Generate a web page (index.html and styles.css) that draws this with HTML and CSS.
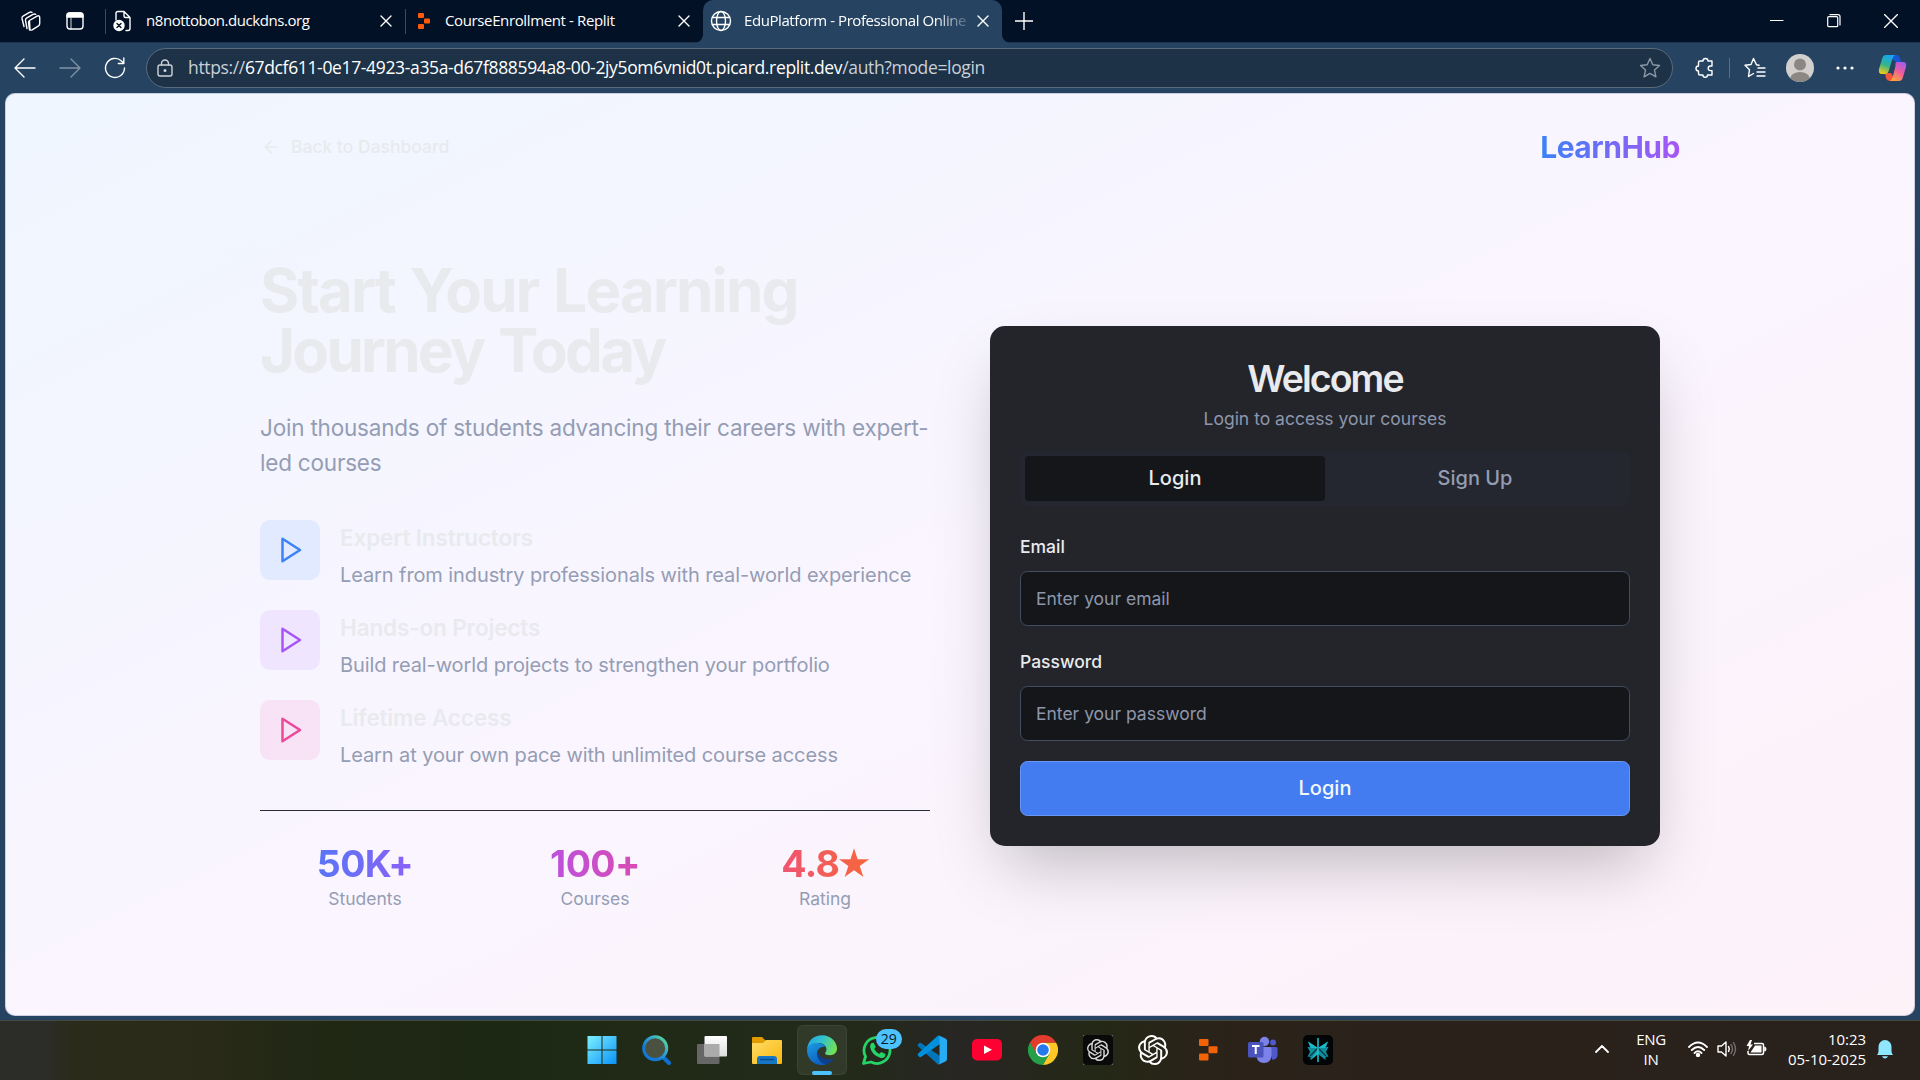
FILE: index.html
```html
<!DOCTYPE html>
<html lang="en">
<head>
<meta charset="utf-8">
<title>EduPlatform - Professional Online</title>
<link rel="stylesheet" href="styles.css">
</head>
<body>
<div class="tabstrip">
  <div class="strip-tools">
    <svg class="ic" width="22" height="24" viewBox="0 0 22 24"><path d="M9.500 11.500l7.500-4.300q2.500-1.200 2.700 1.200v6.200q0 1.500-1.200 2.300l-6.300 3.900q-2 1-2.300-1.200zM9.500 11.500q-1 .6-1 2l1 7.500M7 19.500L5.500 11.500q-.2-1.600 1-2.300l6.500-3.900q1.500-.7 2.700 0M4 17.500L2 9.500q-.3-1.600 1-2.300L9.500 3.300q1.300-.7 2.500 0"/></svg>
    <svg class="ic" width="20" height="20" viewBox="0 0 20 20"><rect x="2" y="2" width="16" height="16" rx="3"/><path d="M2 6V4.500Q2 2 4.500 2h11Q18 2 18 4.500V6z" fill="#fff"/><path d="M6 7v11" stroke-opacity=".6"/></svg>
  </div>
  <div class="tab tab-first">
    <svg class="ic" width="20" height="22" viewBox="0 0 20 22"><path d="M3 10V3.500Q3 1.500 5 1.500h6l6 6v11q0 2-2 2h-2M11 1.500v4.500q0 1.500 1.500 1.500H17"/><circle cx="6" cy="15.500" r="5" fill="#fff"/><path d="M4 13.500l4 4m0-4l-4 4" stroke="#041227"/></svg>
    <span class="tab-title t1">n8nottobon.duckdns.org</span>
    <svg class="ic close" width="12" height="12" viewBox="0 0 12 12"><path d="M1 1l10 10m0-10L1 11"/></svg>
  </div>
  <div class="tab tab-second">
    <svg width="14" height="16" viewBox="0 0 14 16" fill="#ff5a0a"><rect x="1" y="0" width="6" height="5" rx="1"/><rect x="7" y="5.500" width="6" height="5" rx="1"/><rect x="1" y="11" width="6" height="5" rx="1"/></svg>
    <span class="tab-title t2">CourseEnrollment - Replit</span>
    <svg class="ic close" width="12" height="12" viewBox="0 0 12 12"><path d="M1 1l10 10m0-10L1 11"/></svg>
  </div>
  <div class="tab tab-active">
    <svg class="ic" width="22" height="22" viewBox="0 0 22 22"><circle cx="11" cy="11" r="9.500"/><ellipse cx="11" cy="11" rx="4.500" ry="9.500"/><path d="M2.500 7.500h17M2.500 14.500h17"/></svg>
    <span class="tab-title t3">EduPlatform - Professional Online</span>
    <svg class="ic close" width="12" height="12" viewBox="0 0 12 12"><path d="M1 1l10 10m0-10L1 11"/></svg>
  </div>
  <svg class="ic plus" width="18" height="18" viewBox="0 0 18 18"><path d="M9 0v18M0 9h18"/></svg>
  <div class="window-buttons">
    <svg class="ic sharp" width="14" height="14" viewBox="0 0 14 14"><path d="M0 6.500h13"/></svg>
    <svg class="ic sharp" width="14" height="14" viewBox="0 0 14 14"><rect x=".7" y="2.700" width="10" height="10" rx="1"/><path d="M3 .7h8q2 0 2 2V11"/></svg>
    <svg class="ic" width="14" height="14" viewBox="0 0 14 14"><path d="M.5.5l13 13m0-13l-13 13"/></svg>
  </div>
</div>

<div class="toolbar">
  <svg class="ic nav-back" width="22" height="20" viewBox="0 0 22 20"><path d="M21 10H1.500M10 1L1 10l9 9"/></svg>
  <svg class="ic nav-fwd" width="22" height="20" viewBox="0 0 22 20"><path d="M1 10h19.500M12 1l9 9-9 9"/></svg>
  <svg class="ic" width="22" height="22" viewBox="0 0 22 22"><path d="M20.500 11a9.500 9.500 0 1 1-3-7L19.500 6M19.800 1v5.500h-5.500"/></svg>
  <div class="address">
    <svg class="ic dim" width="18" height="18" viewBox="0 0 18 18"><rect x="2" y="6" width="14" height="11" rx="2"/><path d="M5.500 6V4.500a3.500 3.500 0 0 1 7 0V6"/><circle cx="9" cy="11.500" r=".8" fill="#fff"/></svg>
    <span class="url"><span class="soft">https://</span>67dcf611-0e17-4923-a35a-d67f888594a8-00-2jy5om6vnid0t.picard.replit.dev<span class="soft">/auth?mode=login</span></span>
    <svg class="ic star" width="22" height="22" viewBox="0 0 22 22"><path d="M11 1.500l2.800 6.200 6.700.8-5 4.600 1.400 6.700L11 16.400l-5.900 3.400 1.400-6.700-5-4.600 6.700-.8z"/></svg>
  </div>
  <div class="toolbar-right">
    <svg class="ic" width="22" height="22" viewBox="0 0 22 22"><path d="M6 4h3a2.500 2.500 0 0 1 5 0h4v5h-1.500a2.300 2.300 0 0 0 0 4.600H18V18h-4.500a2.300 2.300 0 0 1-4.600 0H6q-1.500 0-1.500-1.500V14a2.400 2.400 0 0 1 0-5V5.500Q4.500 4 6 4z"/></svg>
    <i class="sep"></i>
    <svg class="ic fav" width="22" height="22" viewBox="0 0 22 22"><path d="M12.500 7.800L9.500 1.500 7 7.500l-6 .8 4.500 4.400L4.500 19.500l5-3M12.500 7.800L15 8.300M14 11h7M13 15h8M13 19h8"/></svg>
    <svg class="avatar" width="28" height="28" viewBox="0 0 28 28"><clipPath id="av"><circle cx="14" cy="14" r="14"/></clipPath><g clip-path="url(#av)"><path fill="#d2d0ce" d="M0 0h28v28H0z"/><circle cx="14" cy="10.500" r="6" fill="#8d8784"/><ellipse cx="14" cy="25" rx="10" ry="7" fill="#8d8784"/></g></svg>
    <svg class="dots" width="18" height="4" viewBox="0 0 18 4" fill="#fff"><circle cx="2" cy="2" r="1.600"/><circle cx="9" cy="2" r="1.600"/><circle cx="16" cy="2" r="1.600"/></svg>
    <svg class="copilot" width="30" height="28" viewBox="0 0 30 28"><defs><linearGradient id="cp1" x1=".5" y1="0" x2=".2" y2="1"><stop offset="0" stop-color="#19a5ee"/><stop offset=".5" stop-color="#30b68b"/><stop offset="1" stop-color="#ffcb10"/></linearGradient><linearGradient id="cp2" x1=".8" y1="0" x2=".3" y2="1"><stop offset="0" stop-color="#a25bf0"/><stop offset=".5" stop-color="#ef5c9c"/><stop offset="1" stop-color="#ffa13d"/></linearGradient></defs><path d="M8 1h11q2 0 3 3l1 4h-5z" fill="#1656cf"/><path d="M7 19h6l5 8h-6q-3 0-4-3z" fill="#f5543c"/><path d="M8 1h9q-2 1-3 5l-3 10q-1 4-4 4H4q-4 0-3-5L4 5q1-4 4-4z" fill="url(#cp1)"/><path d="M19 8h6q4 0 3 5l-3 10q-1 4-4 4h-9q2-1 3-5l2.500-10Q17 8 19 8z" fill="url(#cp2)"/></svg>
  </div>
</div>

<div class="viewport">
  <header class="site-header">
    <a class="back"><svg width="20" height="20" viewBox="0 0 24 24"><path d="M12 19l-7-7 7-7M19 12H5"/></svg>Back to Dashboard</a>
    <div class="brand">LearnHub</div>
  </header>
  <main class="split">
    <section class="pitch">
      <h1><span class="line-one">Start Your Learning</span> <span class="line-two">Journey Today</span></h1>
      <p class="lead">Join thousands of students advancing their careers with expert-<wbr>led courses</p>
      <ul class="features">
        <li><span class="badge blue"><svg viewBox="0 0 24 24"><path d="M6 3l14 9-14 9z"/></svg></span><div><h3>Expert Instructors</h3><p>Learn from industry professionals with real-world experience</p></div></li>
        <li><span class="badge purple"><svg viewBox="0 0 24 24"><path d="M6 3l14 9-14 9z"/></svg></span><div><h3>Hands-on Projects</h3><p>Build real-world projects to strengthen your portfolio</p></div></li>
        <li><span class="badge pink"><svg viewBox="0 0 24 24"><path d="M6 3l14 9-14 9z"/></svg></span><div><h3>Lifetime Access</h3><p>Learn at your own pace with unlimited course access</p></div></li>
      </ul>
      <div class="stats">
        <div><strong class="g1">50K+</strong><span>Students</span></div>
        <div><strong class="g2">100+</strong><span>Courses</span></div>
        <div><strong class="g3">4.8<span class="rate">★</span></strong><span>Rating</span></div>
      </div>
    </section>
    <section class="card">
      <h2>Welcome</h2>
      <p class="sub">Login to access your courses</p>
      <div class="switch"><button class="on">Login</button><button>Sign Up</button></div>
      <form>
        <label for="email">Email</label>
        <input id="email" type="email" placeholder="Enter your email">
        <label for="password">Password</label>
        <input id="password" type="password" placeholder="Enter your password">
        <button class="submit" type="button">Login</button>
      </form>
    </section>
  </main>
</div>

<footer class="taskbar">
  <div class="apps">
    <span><svg width="30" height="30" viewBox="0 0 30 30"><defs><linearGradient id="win" x1="0" y1="0" x2="1" y2="1"><stop offset="0" stop-color="#7df0ff"/><stop offset="1" stop-color="#0a93f8"/></linearGradient></defs><path fill="url(#win)" d="M.5 1h14v13.500H.5zM15.500 1h14v13.500h-14zM.5 15.500h14V29H.5zM15.500 15.500h14V29h-14z"/></svg></span>
    <span><svg width="30" height="30" viewBox="0 0 30 30" fill="none"><defs><linearGradient id="sr" x1="1" y1="0" x2="0.300" y2=".7"><stop offset="0" stop-color="#62e388"/><stop offset=".5" stop-color="#32a9d0"/><stop offset="1" stop-color="#1179d8"/></linearGradient></defs><path d="M21 22l6 6" stroke="#0f6fd0" stroke-width="4" stroke-linecap="round"/><circle cx="13.200" cy="13.200" r="11.500" fill="#4a5141" stroke="url(#sr)" stroke-width="3"/></svg></span>
    <span><svg width="30" height="30" viewBox="0 0 30 30"><defs><linearGradient id="tv" x1="0" y1="0" x2="0" y2="1"><stop offset="0" stop-color="#fff"/><stop offset="1" stop-color="#dcdcdc"/></linearGradient></defs><rect x="0" y="9" width="22.500" height="20" rx="1" fill="#666"/><rect x="7.500" y="1" width="22.500" height="20.500" rx="1" fill="url(#tv)"/><path d="M7.500 9h15v12.500h-15z" fill="#ababab"/></svg></span>
    <span><svg width="30" height="30" viewBox="0 0 30 30"><defs><linearGradient id="fo" x1="0" y1="0" x2="1" y2="1"><stop offset="0" stop-color="#ffdc69"/><stop offset="1" stop-color="#f9b70b"/></linearGradient></defs><path d="M0 3q0-1 1-1h9l4 4v6H0z" fill="#e19a00"/><path d="M0 8h11l3-3h15q1 0 1 1v22q0 1-1 1H1q-1 0-1-1z" fill="url(#fo)"/><path d="M5 29v-5q0-3 3-3h14q3 0 3 3v5z" fill="#1677c7"/><path d="M8 24.500h14" stroke="#0a4a8c" stroke-width="1.500"/></svg></span>
    <span class="active"><svg width="30" height="30" viewBox="0 0 30 30"><defs><linearGradient id="eg" x1="0" y1=".2" x2="1" y2=".5"><stop offset="0" stop-color="#23a5e6"/><stop offset=".5" stop-color="#34c4c8"/><stop offset="1" stop-color="#73e155"/></linearGradient><linearGradient id="eb" x1="0" y1="0" x2=".5" y2="1"><stop offset="0" stop-color="#1b9de2"/><stop offset="1" stop-color="#0c61c0"/></linearGradient></defs><path d="M11 14q-1 5 3 8 5 3.500 13 1.500Q22.500 30 15 29.800 8 29 7 22z" fill="#103f8f"/><path d="M0 14.500C1 5 7 .2 15 .2 24 .2 30 7 30 13.500c0 4-3 6.700-7 6.700-3 0-5-.8-5-2 0-.8 1.500-1.500 1.500-4C19.500 11 16 8 11.500 8 6 8 1 11 0 14.500z" fill="url(#eg)"/><path d="M0 15C.5 10 6 7.500 11 8c4 .3 6.500 2 7.500 4-5-1-9 3-8.500 7.500C10.500 25 15 29 19 29.300 9 32 0 25.500 0 15z" fill="url(#eb)"/></svg></span>
    <span class="wa"><svg width="30" height="30" viewBox="0 0 30 30" fill="none"><path d="M1.500 28.500l2-7A13 13 0 1 1 9 27z" stroke="#25d366" stroke-width="2.800" stroke-linejoin="round"/><path d="M9.500 8l2.200-.3 2 4.300-1.500 2q2 3.500 5 5l2-2 4.300 2-.3 2.200q-1.500 2.300-4.500 1.800Q10 20.500 8 12q0-2.500 1.500-4z" fill="#25d366"/></svg><b>29</b></span>
    <span><svg width="30" height="30" viewBox="0 0 30 30"><path d="M1.200 9.200Q0 10.500 1.200 11.500L21 29.500l2-1V21L4 8q-1.500-.8-2.800 1.200z" fill="#0075ba"/><path d="M1.200 20.800Q0 19.500 1.200 18.500L21 .5l2 1V9L4 22q-1.500.8-2.800-1.200z" fill="#0090dc"/><path d="M21.500.2L28.500 3.500Q30 4.200 30 6v18q0 1.800-1.500 2.500L21.500 29.800q1.500-1 1-4V4.200q.5-3-1-4z" fill="#27abf3"/></svg></span>
    <span><svg width="30" height="30" viewBox="0 0 30 30"><rect x="0" y="4" width="30" height="21.500" rx="5" fill="#ff0033"/><path d="M12 10.500l8 4.300-8 4.300z" fill="#fff"/></svg></span>
    <span><svg width="30" height="30" viewBox="0 0 30 30"><path d="M15 15l6.500 3.750L15 30A15 15 0 0 1 2 7.500z" fill="#26a048"/><path d="M15 7.500h13A15 15 0 0 1 15 30l6.500-11.250z" fill="#fdc726"/><path d="M2 7.500A15 15 0 0 1 28 7.500H15L8.500 18.750z" fill="#e33b2e"/><circle cx="15" cy="15" r="7.300" fill="#fff"/><circle cx="15" cy="15" r="5.800" fill="#2679ec"/></svg></span>
    <span><svg width="30" height="30" viewBox="0 0 30 30"><rect width="30" height="30" fill="#777"/><rect width="30" height="30" rx="3" fill="#0a0a0a"/><g transform="translate(4 4) scale(.917)" fill="#d8d8d8"><path id="knot" d="M22.2819 9.8211a5.9847 5.9847 0 0 0-.5157-4.9108 6.0462 6.0462 0 0 0-6.5098-2.9A6.0651 6.0651 0 0 0 4.9807 4.1818a5.9847 5.9847 0 0 0-3.9977 2.9 6.0462 6.0462 0 0 0 .7427 7.0966 5.98 5.98 0 0 0 .511 4.9107 6.051 6.051 0 0 0 6.5146 2.9001A5.9847 5.9847 0 0 0 13.2599 24a6.0557 6.0557 0 0 0 5.7718-4.2058 5.9894 5.9894 0 0 0 3.9977-2.9001 6.0557 6.0557 0 0 0-.7475-7.0729zm-9.022 12.6081a4.4755 4.4755 0 0 1-2.8764-1.0408l.1419-.0804 4.7783-2.7582a.7948.7948 0 0 0 .3927-.6813v-6.7369l2.02 1.1686a.071.071 0 0 1 .038.052v5.5826a4.504 4.504 0 0 1-4.4945 4.4944zm-9.6607-4.1254a4.4708 4.4708 0 0 1-.5346-3.0137l.142.0852 4.783 2.7582a.7712.7712 0 0 0 .7806 0l5.8428-3.3685v2.3324a.0804.0804 0 0 1-.0332.0615L9.74 19.9502a4.4992 4.4992 0 0 1-6.1408-1.6464zM2.3408 7.8956a4.485 4.485 0 0 1 2.3655-1.9728V11.6a.7664.7664 0 0 0 .3879.6765l5.8144 3.3543-2.0201 1.1685a.0757.0757 0 0 1-.071 0l-4.8303-2.7865A4.504 4.504 0 0 1 2.3408 7.872zm16.5963 3.8558L13.1038 8.364 15.1192 7.2a.0757.0757 0 0 1 .071 0l4.8303 2.7913a4.4944 4.4944 0 0 1-.6765 8.1042v-5.6772a.79.79 0 0 0-.407-.667zm2.0107-3.0231l-.142-.0852-4.7735-2.7818a.7759.7759 0 0 0-.7854 0L9.409 9.2297V6.8974a.0662.0662 0 0 1 .0284-.0615l4.8303-2.7866a4.4992 4.4992 0 0 1 6.6802 4.66zM8.3065 12.863l-2.02-1.1638a.0804.0804 0 0 1-.038-.0567V6.0742a4.4992 4.4992 0 0 1 7.3757-3.4537l-.142.0805L8.704 5.459a.7948.7948 0 0 0-.3927.6813zm1.0976-2.3654l2.602-1.4998 2.6069 1.4998v2.9994l-2.5974 1.4997-2.6067-1.4997Z"/></g></svg></span>
    <span><svg width="30" height="30" viewBox="0 0 24 24" fill="#fff"><use href="#knot"/></svg></span>
    <span><svg width="30" height="30" viewBox="0 0 30 30" fill="#f26207"><rect x="6" y="4" width="9.500" height="7" rx="1"/><rect x="15.500" y="11.300" width="9" height="7" rx="1"/><rect x="6" y="18.600" width="9.500" height="7" rx="1"/></svg></span>
    <span><svg width="30" height="30" viewBox="0 0 30 30"><circle cx="25" cy="7.500" r="3" fill="#5059c9"/><path d="M20 12h8q1.500 0 1.500 1.500V20q0 4-5 5z" fill="#5059c9"/><circle cx="16.500" cy="6.500" r="4.700" fill="#7b83eb"/><path d="M9 12h13q1.500 0 1.500 1.500v7Q23 28 16 28t-7.500-7z" fill="#7b83eb"/><rect x="0" y="7" width="15.500" height="15.500" rx="1.500" fill="#4b53bc"/><path d="M4 11h7.500M7.750 11v8" stroke="#fff" stroke-width="2"/></svg></span>
    <span><svg width="30" height="30" viewBox="0 0 30 30"><rect width="30" height="30" rx="5" fill="#020506"/><path d="M5 6.500l10 6.500 10-6.500-2 5.500h2.500l-2.500 5 2.500 4.500-3 .5v3L15 19l-7.500 6v-3l-3-.5L7 17l-2.500-5H7z" fill="#118d9b"/><path d="M15 13L5 6.500 8 13zM15 13l10-6.500-3 6.500zM15 15v4l-7.500 6z" fill="#1cb9c8"/><path d="M15 13l-8 8M15 13l8 8" stroke="#03363e" stroke-width="1.100" fill="none"/><path d="M15 3v24" stroke="#22c6d6" stroke-width="1.500"/></svg></span>
  </div>
  <div class="tray">
    <svg class="ic thick" width="14" height="8" viewBox="0 0 14 8"><path d="M1 7l6-6 6 6"/></svg>
    <div class="lang">ENG<br>IN</div>
    <div class="status">
      <svg class="ic thick" width="20" height="16" viewBox="0 0 20 16"><path d="M1 6Q10-3 19 6M3.800 9Q10 3 16.200 9M6.500 12Q10 8.500 13.500 12" /><circle cx="10" cy="14" r="1.300" fill="#fff"/></svg>
      <svg class="ic" width="20" height="18" viewBox="0 0 20 18"><path d="M1 6h3.500L9 2v14l-4.500-4H1zM11.500 6.500q1.600 2.500 0 5"/><path d="M14 4.500q3 4.500 0 9M16.500 2.500q4 6.500 0 13" stroke-opacity=".35"/></svg>
      <svg width="21" height="18" viewBox="0 0 21 18"><path d="M8 3.500h8q1.500 0 1.500 1.500v8q0 1.500-1.500 1.500H3.500Q2 14.500 2 13V11" fill="none" stroke="#fff" stroke-width="1.500"/><path d="M9 5.500h6.500v7h-11z" fill="#fff"/><path d="M4 0L.5 6H3L2 11l5-6.500H4.500L6 0zM18.200 6.500q2.300 0 2.300 2.500t-2.300 2.500z" fill="#fff"/></svg>
    </div>
    <div class="clock">10:23<br>05-10-2025</div>
    <svg width="18" height="20" viewBox="0 0 18 20"><path d="M1 16q1.500-1.500 1.500-4V7.500a6.500 6.500 0 0 1 13 0V12q0 2.500 1.500 4zM6 17.200h6q-1 2.300-3 2.300t-3-2.300z" fill="#8fe6ff"/></svg>
  </div>
</footer>
</body>
</html>
```

FILE: styles.css
```css
* { box-sizing: border-box; margin: 0; padding: 0; }
html { font-size: 20px; }
body { width: 1920px; height: 1080px; overflow: hidden; display: flex; flex-direction: column; background: #264462; font-family: Inter, "Liberation Sans", sans-serif; line-height: 1.5; }
svg { display: block; flex: none; }
.ic { fill: none; stroke: #fff; stroke-width: 1.4; stroke-linecap: round; stroke-linejoin: round; }
.thick { stroke-width: 1.8; }
.sharp { stroke-width: 1.2; }

.tabstrip { height: 43px; flex: none; display: flex; align-items: center; background: #031127; border-bottom: 1px solid #1d3350; font-family: "Open Sans", "Noto Sans", sans-serif; font-size: 15px; color: #fff; padding-right: 22px; }
.strip-tools { display: flex; align-items: center; gap: 23px; width: 105px; padding-left: 20px; }
.tab { display: flex; align-items: center; }
.tab-title { white-space: nowrap; line-height: 22px; padding-bottom: 2px; }
.tab .close { margin-left: auto; }
.tab-first { width: 300px; height: 25px; border-left: 1px solid #3d4a5c; padding: 0 13px 0 7px; }
.tab-first .tab-title { margin-left: 13px; }
.tab-second { width: 298px; height: 25px; border-left: 1px solid #3d4a5c; padding: 0 13px 0 11px; }
.tab-second .tab-title { margin-left: 14px; }
.tab-active { position: relative; width: 299px; height: 43px; align-self: flex-start; background: #264462; border-radius: 10px 10px 0 0; padding: 0 13px 2px 7px; }
.tab-active::before, .tab-active::after { content: ""; position: absolute; bottom: 0; width: 8px; height: 8px; }
.tab-active::before { right: 100%; background: radial-gradient(circle at 0 0, transparent 7.5px, #264462 8px); }
.tab-active::after { left: 100%; background: radial-gradient(circle at 100% 0, transparent 7.5px, #264462 8px); }
.tab-active .tab-title { margin-left: 12px; mask-image: linear-gradient(90deg, #000 190px, rgba(0, 0, 0, .15) 224px); }
.t1 { letter-spacing: -.45px; }
.t2 { letter-spacing: -.37px; }
.t3 { letter-spacing: -.42px; }
.plus { margin-left: 13px; }
.window-buttons { margin-left: auto; display: flex; align-items: center; gap: 43px; }

.toolbar { height: 50px; flex: none; display: flex; align-items: center; padding: 0 0 0 14px; gap: 23px; }
.nav-fwd { stroke: #8192a5; }
.address { width: 1527px; height: 40px; margin-left: -3px; display: flex; align-items: center; background: #1d3147; border: 1px solid #5a6b7c; border-radius: 20px; padding: 0 11px 0 9px; color: #fff; font-family: "Open Sans", "Noto Sans", sans-serif; font-size: 17.5px; }
.url { margin-left: 14px; padding-bottom: 1px; white-space: nowrap; letter-spacing: -.35px; }
.soft { color: #c9d0d8; }
.dim { stroke: #cdd3da; }
.star { margin-left: auto; stroke: #8b98a6; }
.toolbar-right { display: flex; align-items: center; margin-left: -2px; }
.sep { width: 1px; height: 20px; margin: 0 14px 0 13px; background: #55708a; }
.avatar { margin-left: 20px; }
.dots { margin-left: 22px; }
.copilot { margin-left: 24px; }

.viewport { margin: 0 5px 4px; height: 923px; flex: none; border-radius: 10px; background: linear-gradient(to bottom right, #eff6ff, #faf5ff, #fdf2f8); overflow: hidden; box-shadow: inset 0 0 0 1px rgba(60, 75, 110, .22); }
.site-header { width: 1440px; margin: 0 auto; padding-top: 29px; display: flex; align-items: center; justify-content: space-between; }
.back { display: flex; align-items: center; gap: 10px; padding: 0 21px; color: #e8eaed; font-size: 17.5px; font-weight: 500; }
.back svg { fill: none; stroke: currentColor; stroke-width: 2; stroke-linecap: round; stroke-linejoin: round; }
.brand, .stats strong { background-clip: text; -webkit-background-clip: text; color: transparent; }
.brand { font-size: 30px; font-weight: 700; line-height: 50px; letter-spacing: -.48px; background-image: linear-gradient(to right, #3b82f6, #a855f7); }
.split { width: 1440px; margin: 0 auto; padding: 88px 20px 0; display: grid; grid-template-columns: 1fr 1fr; gap: 60px; align-items: center; }

h1 { font-size: 60px; line-height: 60px; font-weight: 700; color: #e8eaed; }
.line-one, .line-two { display: block; }
.line-one { letter-spacing: -1.8px; word-spacing: 2.4px; }
.line-two { letter-spacing: -2.7px; word-spacing: 3.5px; }
.lead { margin-top: 30px; font-size: 22.5px; line-height: 35px; letter-spacing: -.2px; color: #949db3; }
.features { list-style: none; margin-top: 40px; display: flex; flex-direction: column; gap: 20px; color: #949db3; }
.features li { display: flex; gap: 20px; height: 70px; }
.features h3 { font-size: 22.5px; line-height: 35px; font-weight: 600; letter-spacing: -.14px; color: #e8eaed; margin-bottom: 5px; }
.features p { font-size: 20px; line-height: 30px; letter-spacing: -.1px; }
.badge { width: 60px; height: 60px; border-radius: 10px; display: grid; place-items: center; flex: none; }
.badge svg { width: 30px; height: 30px; fill: none; stroke: currentColor; stroke-width: 2; stroke-linejoin: round; }
.blue { color: #3b82f6; background: #e1eafe; }
.purple { color: #a855f7; background: #efe5fe; }
.pink { color: #ec4899; background: #f7e3f5; }
.stats { margin-top: 40px; border-top: 1px solid #292d38; padding-top: 30px; display: grid; grid-template-columns: repeat(3, 1fr); gap: 20px; text-align: center; color: #949db3; font-size: 17.5px; line-height: 25px; }
.stats strong { display: block; font-size: 37.5px; line-height: 45px; font-weight: 700; letter-spacing: -.6px; }
.rate { font-size: 35px; line-height: 40px; margin: 0 -3px 0 -3.5px; }
.g1 { background-image: linear-gradient(to right, #3b82f6, #a855f7); }
.g2 { background-image: linear-gradient(to right, #a855f7, #ec4899); }
.g3 { background-image: linear-gradient(to right, #ec4899, #f97316); }

.card { background: #24252a; border-radius: 15px; padding: 30px; color: #e8eaed; box-shadow: 0 31px 62px -15px rgba(0, 0, 0, .25); }
h2 { font-size: 37.5px; line-height: 45px; font-weight: 600; letter-spacing: -1.95px; text-align: center; }
.sub { margin-top: 5px; font-size: 17.5px; line-height: 25px; text-align: center; color: #8d96ac; }
.switch { margin-top: 20px; height: 55px; padding: 5px; display: grid; grid-template-columns: 1fr 1fr; background: #24272f; border-radius: 8px; }
.switch button { border: 0; border-radius: 4px; background: none; color: #949db3; font: 500 20px/30px Inter, sans-serif; }
.switch .on { background: #151619; color: #e8eaed; }
form { margin-top: 25px; display: flex; flex-direction: column; }
label { font-size: 17.5px; font-weight: 500; height: 30px; line-height: 32px; margin-bottom: 10px; }
input { height: 55px; margin-bottom: 20px; border: 1px solid #434d61; border-radius: 7.5px; background: #151619; padding: 0 15px; font: 400 17.5px/25px Inter, sans-serif; color: #e8eaed; }
input::placeholder { color: #8d96ac; opacity: 1; }
.submit { height: 55px; border: 1px solid #6a97f5; border-radius: 7.5px; background: #437cf1; color: #f4f7fc; font: 500 20px/30px Inter, sans-serif; }

.taskbar { flex: 1; display: grid; grid-template-columns: 1fr 771px 1fr; align-items: center; border-top: 1px solid #45483f; background: linear-gradient(90deg, #2c2c29 0, #2c2c28 50px, #2b2b1b 70px, #2a2a18 200px, #212815 300px, #1d2814 480px, #1f2a16 570px, #232a1a 860px, #282624 960px, #242816 1090px, #2b221a 1240px, #29211c 1920px); color: #fff; font-family: "Open Sans", "Noto Sans", sans-serif; }
.apps { grid-column: 2; display: flex; justify-content: space-between; padding-bottom: 1px; }
.apps > span { width: 55px; height: 58px; display: grid; place-items: center; position: relative; }
.active::before { content: ""; position: absolute; inset: 4px 2.500px; background: rgba(255, 255, 255, .07); border: 1px solid rgba(255, 255, 255, .06); border-radius: 6px; }
.active::after { content: ""; position: absolute; bottom: 4px; width: 20px; height: 4px; border-radius: 2px; background: #4cc2ff; }
.active svg { position: relative; }
.wa b { position: absolute; left: 26px; top: 8px; width: 26px; height: 20px; border-radius: 10px; background: #4cc2ff; color: #0b1a26; font-size: 14px; font-weight: 400; line-height: 20px; text-align: center; }
.tray { display: flex; align-items: center; justify-content: flex-end; padding: 0 26px 3px 0; font-size: 15px; line-height: 20px; letter-spacing: -.3px; }
.lang { width: 40px; margin-left: 22px; text-align: center; }
.status { display: flex; gap: 9px; margin-left: 17px; align-items: center; }
.clock { margin: 0 10px 0 19px; text-align: right; width: 80px; letter-spacing: -.03px; }
```
